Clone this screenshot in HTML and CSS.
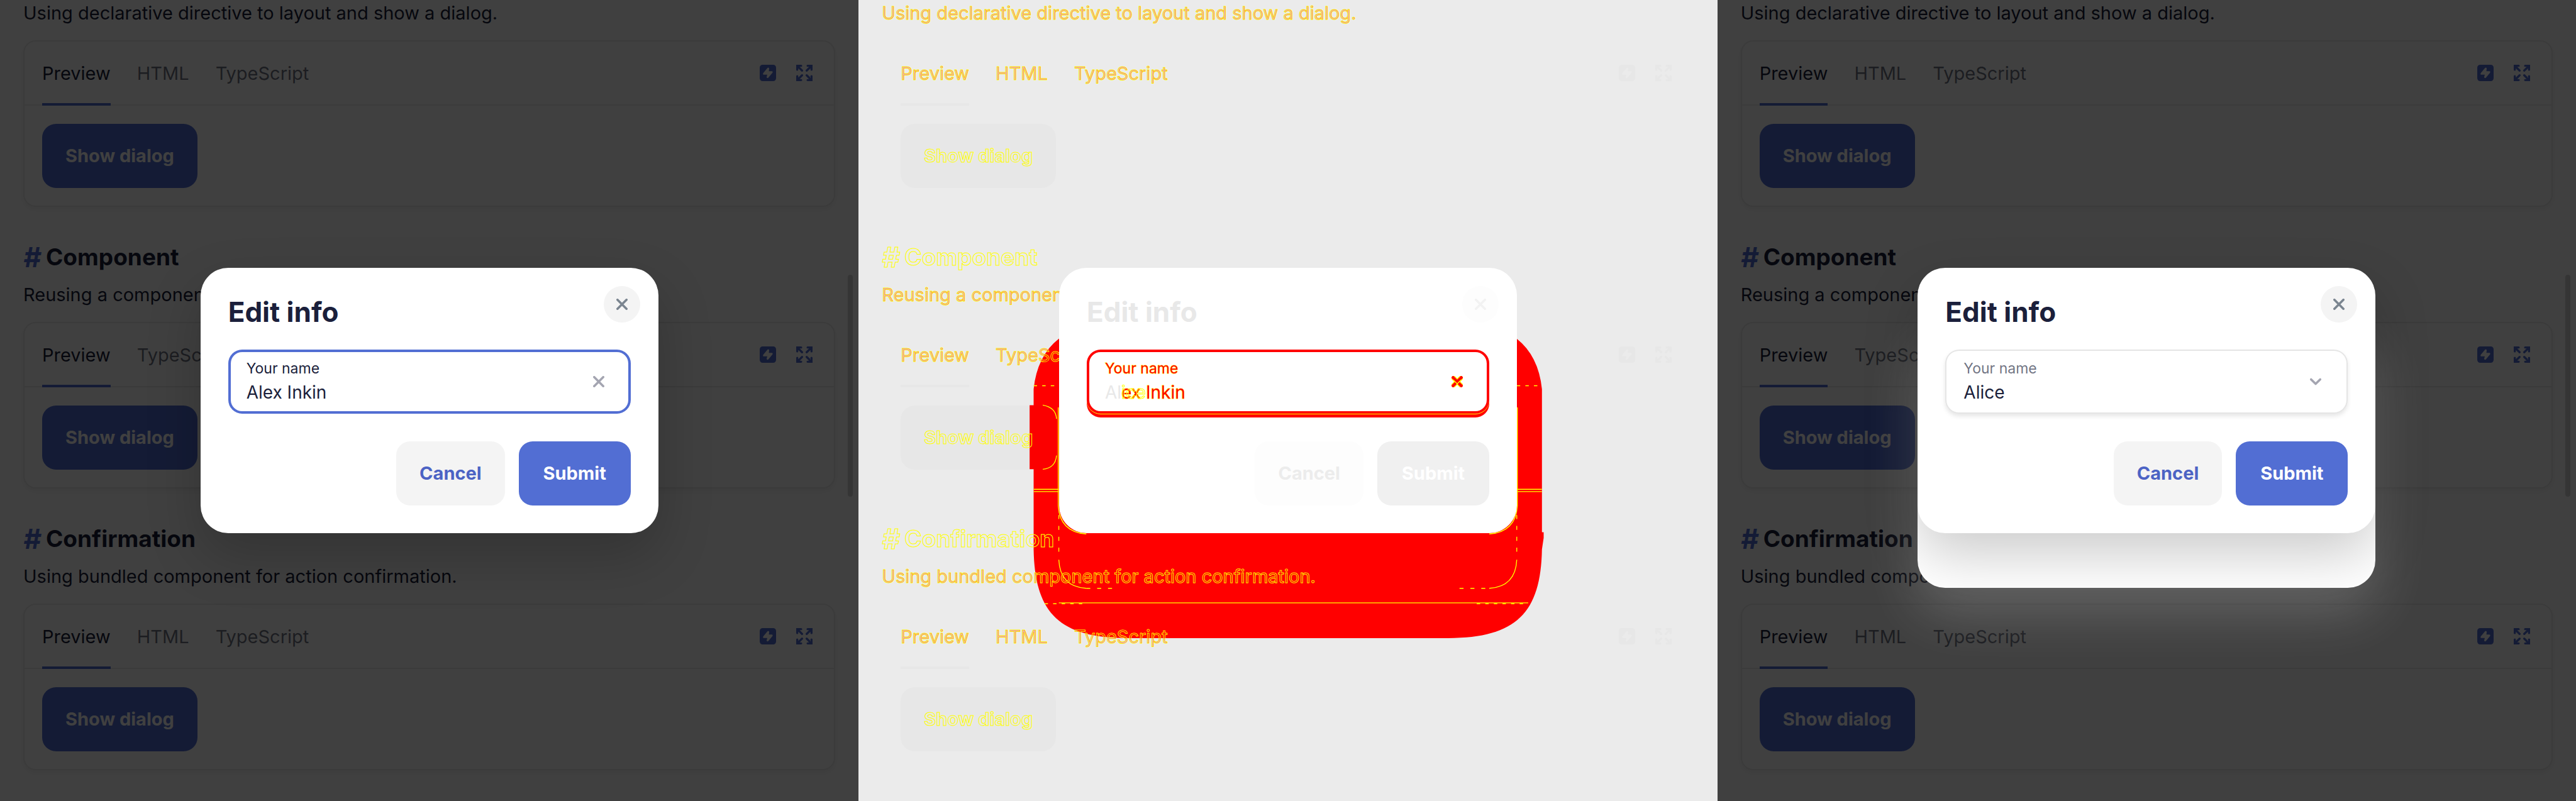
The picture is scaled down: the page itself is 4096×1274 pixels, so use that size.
FILE: index.html
```html
<!DOCTYPE html>
<html lang="en">
<head>
<meta charset="utf-8">
<title>Dialog – visual comparison</title>
<link rel="stylesheet" href="styles.css">
</head>
<body>
<svg class="sprite" aria-hidden="true">
  <symbol id="bolt" viewBox="0 0 28 28">
    <path fill="currentColor" fill-rule="evenodd" d="M5 0H23A5 5 0 0 1 28 5V23A5 5 0 0 1 23 28H5A5 5 0 0 1 0 23V5A5 5 0 0 1 5 0ZM13.4 5.4L6 14.2Q5 17 7 17H12.9L11.8 21.2Q12.4 23.6 14.6 22.4L21.8 13.8Q23 11.4 20.8 11H15.6L16.2 6.8Q15.8 4 13.4 5.4Z"/>
  </symbol>
  <symbol id="expand" viewBox="0 0 28 28">
    <g fill="none" stroke="currentColor" stroke-width="3.6" stroke-linecap="round">
      <path d="M1.8 8.5V1.8H8.5M2.5 2.5L10 10"/>
      <path d="M19.5 1.8H26.2V8.5M25.5 2.5L18 10"/>
      <path d="M1.8 19.5V26.2H8.5M2.5 25.5L10 18"/>
      <path d="M26.2 19.5V26.2H19.5M25.5 25.5L18 18"/>
    </g>
    <path fill="currentColor" d="M0 0H6L0 6ZM28 0V6L22 0ZM0 28V22L6 28ZM28 28H22L28 22Z"/>
  </symbol>
  <symbol id="cross" viewBox="0 0 20 20">
    <path fill="none" stroke="currentColor" stroke-width="4" stroke-linecap="round" d="M2 2L18 18M18 2L2 18"/>
  </symbol>
  <symbol id="chevron" viewBox="0 0 20 20">
    <path fill="none" stroke="currentColor" stroke-width="4" stroke-linecap="round" stroke-linejoin="round" d="M2 6L10 14L18 6"/>
  </symbol>
</svg>

<main class="compare">

  <!-- Baseline -->
  <section class="shot">
    <div class="page">
      <article class="example">
        <p class="lead">Using declarative directive to layout and show a dialog.</p>
        <div class="card">
          <div class="bar">
            <button class="tab active">Preview</button><button class="tab">HTML</button><button class="tab">TypeScript</button>
            <span class="tools"><button class="tool" aria-label="Edit on StackBlitz"><svg><use href="#bolt"/></svg></button><button class="tool" aria-label="Fullscreen"><svg><use href="#expand"/></svg></button></span>
          </div>
          <div class="body"><button class="btn primary">Show dialog</button></div>
        </div>
      </article>
      <article class="example">
        <h2><a href="#component">#</a>Component</h2>
        <p class="lead">Reusing a component</p>
        <div class="card">
          <div class="bar">
            <button class="tab active">Preview</button><button class="tab">TypeScript</button>
            <span class="tools"><button class="tool" aria-label="Edit on StackBlitz"><svg><use href="#bolt"/></svg></button><button class="tool" aria-label="Fullscreen"><svg><use href="#expand"/></svg></button></span>
          </div>
          <div class="body"><button class="btn primary">Show dialog</button></div>
        </div>
      </article>
      <article class="example">
        <h2><a href="#confirmation">#</a>Confirmation</h2>
        <p class="lead">Using bundled component for action confirmation.</p>
        <div class="card">
          <div class="bar">
            <button class="tab active">Preview</button><button class="tab">HTML</button><button class="tab">TypeScript</button>
            <span class="tools"><button class="tool" aria-label="Edit on StackBlitz"><svg><use href="#bolt"/></svg></button><button class="tool" aria-label="Fullscreen"><svg><use href="#expand"/></svg></button></span>
          </div>
          <div class="body"><button class="btn primary">Show dialog</button></div>
        </div>
      </article>
    </div>
    <div class="overlay">
      <div class="dialog" role="dialog" aria-labelledby="t1">
        <form class="sheet">
          <h1 id="t1">Edit info</h1>
          <button type="button" class="close" aria-label="Close"><svg><use href="#cross"/></svg></button>
          <div class="field focused">
            <div class="stack">
              <label for="name1">Your name</label>
              <input id="name1" type="text" value="Alex Inkin">
            </div>
            <button type="button" class="mark" aria-label="Clear"><svg><use href="#cross"/></svg></button>
          </div>
          <div class="actions">
            <button type="button" class="btn secondary">Cancel</button>
            <button type="button" class="btn primary submit">Submit</button>
          </div>
        </form>
      </div>
    </div>
    <div class="thumb"></div>
  </section>

  <!-- Difference map -->
  <section class="shot diff">
    <svg class="changes" viewBox="0 0 1500 1400" aria-hidden="true">
      <path fill="#f00" d="M350 592Q312 622 306 680V708H299V820H306V960C308 1070 350 1115 470 1115H1030C1150 1115 1192 1070 1194 960L1197 940V930H1194V680Q1188 622 1150 592Z"/>
      <g fill="none" stroke="#ff0" stroke-width="1.5">
        <path d="M306 855H350M306 859H350M1150 855H1194M1150 859H1194"/>
        <path d="M350 1053.500H1170"/>
        <path stroke-dasharray="6 9" d="M325 1055H400M1080 1055H1165M306 674H350M1150 674H1194"/>
        <path d="M322 708Q345 712 346 732M346 796Q344 818 322 820"/>
        <path d="M349 712V884Q352 930 398 933M1151 712V884Q1148 930 1102 933"/>
        <path stroke-dasharray="7 12" d="M350 900V970M1150 900V970M398 1028H450M1050 1028H1102"/>
        <path d="M350 978Q352 1025 398 1028M1150 978Q1148 1025 1102 1028"/>
      </g>
    </svg>
    <div class="page">
      <article class="example">
        <p class="lead">Using declarative directive to layout and show a dialog.</p>
        <div class="card">
          <div class="bar">
            <button class="tab active">Preview</button><button class="tab">HTML</button><button class="tab">TypeScript</button>
            <span class="tools"><button class="tool" aria-label="Edit on StackBlitz"><svg><use href="#bolt"/></svg></button><button class="tool" aria-label="Fullscreen"><svg><use href="#expand"/></svg></button></span>
          </div>
          <div class="body"><button class="btn primary">Show dialog</button></div>
        </div>
      </article>
      <article class="example">
        <h2><a href="#component">#</a>Component</h2>
        <p class="lead">Reusing a component</p>
        <div class="card">
          <div class="bar">
            <button class="tab active">Preview</button><button class="tab">TypeScript</button>
            <span class="tools"><button class="tool" aria-label="Edit on StackBlitz"><svg><use href="#bolt"/></svg></button><button class="tool" aria-label="Fullscreen"><svg><use href="#expand"/></svg></button></span>
          </div>
          <div class="body"><button class="btn primary">Show dialog</button></div>
        </div>
      </article>
      <article class="example">
        <h2><a href="#confirmation">#</a>Confirmation</h2>
        <p class="lead">Using bundled component for action confirmation.</p>
        <div class="card">
          <div class="bar">
            <button class="tab active">Preview</button><button class="tab">HTML</button><button class="tab">TypeScript</button>
            <span class="tools"><button class="tool" aria-label="Edit on StackBlitz"><svg><use href="#bolt"/></svg></button><button class="tool" aria-label="Fullscreen"><svg><use href="#expand"/></svg></button></span>
          </div>
          <div class="body"><button class="btn primary">Show dialog</button></div>
        </div>
      </article>
    </div>
    <div class="overlay">
      <div class="dialog" role="dialog" aria-labelledby="t2">
        <form class="sheet">
          <h1 id="t2">Edit info</h1>
          <button type="button" class="close" aria-label="Close"><svg><use href="#cross"/></svg></button>
          <div class="field">
            <div class="stack">
              <label for="name2">Your name</label>
              <output id="name2">Al<span class="other">ice</span><span class="changed">ex Inkin</span></output>
            </div>
            <span class="mark"><svg viewBox="0 0 20 20"><path fill="none" stroke="#ff0" stroke-width="8" d="M1 1L19 19M19 1L1 19"/><path fill="none" stroke="#f00" stroke-width="5" d="M1 1L19 19M19 1L1 19"/><path fill="none" stroke="#ff0" stroke-width="1.500" d="M3 7L10 14L17 7"/></svg></span>
          </div>
          <div class="actions">
            <button type="button" class="btn secondary">Cancel</button>
            <button type="button" class="btn primary submit">Submit</button>
          </div>
        </form>
      </div>
    </div>
  </section>

  <!-- Current -->
  <section class="shot">
    <div class="page">
      <article class="example">
        <p class="lead">Using declarative directive to layout and show a dialog.</p>
        <div class="card">
          <div class="bar">
            <button class="tab active">Preview</button><button class="tab">HTML</button><button class="tab">TypeScript</button>
            <span class="tools"><button class="tool" aria-label="Edit on StackBlitz"><svg><use href="#bolt"/></svg></button><button class="tool" aria-label="Fullscreen"><svg><use href="#expand"/></svg></button></span>
          </div>
          <div class="body"><button class="btn primary">Show dialog</button></div>
        </div>
      </article>
      <article class="example">
        <h2><a href="#component">#</a>Component</h2>
        <p class="lead">Reusing a component</p>
        <div class="card">
          <div class="bar">
            <button class="tab active">Preview</button><button class="tab">TypeScript</button>
            <span class="tools"><button class="tool" aria-label="Edit on StackBlitz"><svg><use href="#bolt"/></svg></button><button class="tool" aria-label="Fullscreen"><svg><use href="#expand"/></svg></button></span>
          </div>
          <div class="body"><button class="btn primary">Show dialog</button></div>
        </div>
      </article>
      <article class="example">
        <h2><a href="#confirmation">#</a>Confirmation</h2>
        <p class="lead">Using bundled component for action confirmation.</p>
        <div class="card">
          <div class="bar">
            <button class="tab active">Preview</button><button class="tab">HTML</button><button class="tab">TypeScript</button>
            <span class="tools"><button class="tool" aria-label="Edit on StackBlitz"><svg><use href="#bolt"/></svg></button><button class="tool" aria-label="Fullscreen"><svg><use href="#expand"/></svg></button></span>
          </div>
          <div class="body"><button class="btn primary">Show dialog</button></div>
        </div>
      </article>
    </div>
    <div class="overlay">
      <div class="dialog stacked" role="dialog" aria-labelledby="t3">
        <form class="sheet">
          <h1 id="t3">Edit info</h1>
          <button type="button" class="close" aria-label="Close"><svg><use href="#cross"/></svg></button>
          <div class="field">
            <div class="stack">
              <label for="name3">Your name</label>
              <select id="name3"><option>Alice</option></select>
            </div>
            <span class="mark"><svg><use href="#chevron"/></svg></span>
          </div>
          <div class="actions">
            <button type="button" class="btn secondary">Cancel</button>
            <button type="button" class="btn primary submit">Submit</button>
          </div>
        </form>
      </div>
    </div>
    <div class="thumb"></div>
  </section>

</main>
</body>
</html>
```

FILE: styles.css
```css
:root {
  --text: #1b1f3b;
  --text-2: rgba(27, 31, 59, .65);
  --text-3: rgba(27, 31, 59, .4);
  --accent: #526ed3;
  --link: #4c63c4;
  --soft: #f4f4f4;
}

* { box-sizing: border-box; margin: 0; }

body {
  font: 400 29px/40px Inter, "Liberation Sans", sans-serif;
  color: var(--text);
}

button, input, select {
  font: inherit;
  color: inherit;
  background: none;
  border: 0;
  padding: 0;
  appearance: none;
}

svg { display: block; }
.sprite { display: none; }

.compare {
  display: grid;
  grid-template-columns: repeat(3, 1fr);
  min-height: 100vh;
}

.shot {
  position: relative;
  overflow: hidden;
  background: #fff;
}

/* Documentation page under the dialog */
.page {
  position: relative;
  display: flex;
  flex-direction: column;
  gap: 58px;
  padding: 1px 37px 48px;
}

h2 {
  display: flex;
  margin-bottom: 18px;
  font-size: 37px;
  line-height: 44px;
  font-weight: 700;
}

h2 a {
  flex: 0 0 36px;
  color: var(--accent);
  font-size: 44px;
  font-style: italic;
  text-decoration: none;
}

.lead { margin-bottom: 23px; }

.card {
  border: 2px solid rgba(0, 0, 0, .08);
  border-radius: 20px;
  box-shadow: 0 4px 8px rgba(0, 0, 0, .06);
}

.bar {
  display: flex;
  gap: 42px;
  height: 102px;
  padding: 0 34px 0 28px;
  border-bottom: 2px solid rgba(0, 0, 0, .08);
}

.tab {
  height: 102px;
  color: var(--text-2);
}

.tab.active {
  color: var(--text);
  box-shadow: inset 0 -4px var(--accent);
}

.tools {
  display: flex;
  align-items: center;
  gap: 32px;
  margin-left: auto;
}

.tool { color: var(--accent); }
.tool svg { width: 26px; height: 26px; }

.body { padding: 29px 28px 28px; }

.btn {
  height: 102px;
  padding: 0 37px;
  border-radius: 22px;
  font-weight: 700;
}

.btn.primary { background: var(--accent); color: #fff; }
.btn.secondary { background: var(--soft); color: var(--link); }
.btn.submit { min-width: 178px; }
.body .btn { display: block; }

/* Dialog */
.overlay {
  position: absolute;
  inset: 0;
  display: flex;
  align-items: center;
  justify-content: center;
  background: rgba(0, 0, 0, .75);
}

.dialog {
  position: relative;
  width: 728px;
}

.dialog.stacked::before {
  content: "";
  position: absolute;
  inset: 87px 0 -87px;
  border-radius: 44px;
  background: #fff;
  box-shadow: 0 36px 87px rgba(255, 255, 255, .2);
}

.sheet {
  position: relative;
  padding: 44px;
  border-radius: 44px;
  background: #fff;
  box-shadow: 0 36px 87px rgba(0, 0, 0, .2);
}

h1 {
  margin-bottom: 34px;
  font-size: 44px;
  line-height: 52px;
  font-weight: 700;
}

.close {
  position: absolute;
  top: 29px;
  right: 29px;
  display: grid;
  place-items: center;
  width: 58px;
  height: 58px;
  border-radius: 50%;
  background: var(--soft);
  color: #7b8590;
}

.close svg, .mark svg { width: 18px; height: 18px; }

.field {
  display: flex;
  align-items: center;
  height: 102px;
  padding: 0 42px 0 29px;
  border-radius: 22px;
  box-shadow: inset 0 0 0 2px rgba(0, 0, 0, .1), 0 4px 7px rgba(0, 0, 0, .1);
}

.field.focused { box-shadow: inset 0 0 0 4px var(--accent); }

.stack {
  flex: 1;
  display: flex;
  flex-direction: column;
  gap: 4px;
}

.stack label {
  font-size: 23px;
  line-height: 30px;
  color: var(--text-2);
}

.focused label { color: var(--text); }

.stack input, .stack select, .stack output {
  width: 100%;
  height: 38px;
  font-size: 28px;
  line-height: 38px;
}

.mark { color: var(--text-3); }

.actions {
  display: flex;
  justify-content: flex-end;
  gap: 22px;
  margin-top: 44px;
}

.thumb {
  position: absolute;
  top: 437px;
  right: 9px;
  width: 8px;
  height: 353px;
  border-radius: 4px;
  background: rgba(0, 0, 0, .16);
}

/* Difference map */
.diff { background: #ebebeb; }

.changes {
  position: absolute;
  inset: 0;
  width: 100%;
  height: auto;
}

.diff .overlay { background: none; }
.diff .sheet { box-shadow: none; }
.diff .card { border-color: transparent; box-shadow: none; }
.diff .bar { border-color: transparent; }
.diff .tool { color: #e7e7e7; }
.diff .tab.active { box-shadow: inset 0 -4px #e7e7e7; }

.diff .page,
.diff .page .btn,
.diff h2 a {
  color: transparent;
  -webkit-text-stroke: 1px #ff0;
}

.diff .page .lead,
.diff .page .tab {
  color: rgba(255, 0, 0, .25);
  paint-order: stroke fill;
}

.diff .page .btn { background: rgba(0, 0, 0, .015); }

.diff h1 { color: #e8e8e8; }
.diff .close { background: #fdfdfd; color: #f2f2f2; }

.diff .field {
  box-shadow: inset 0 0 0 4px #f00, 0 1px #ff0, 0 6px #f00;
}

.diff .stack label,
.changed {
  color: #f00;
  -webkit-text-stroke: 1px #ff0;
  paint-order: stroke fill;
}

.diff output { color: #e8e8e8; }

.other {
  position: absolute;
  color: transparent;
  -webkit-text-stroke: 1px #ff0;
}

.diff .secondary { background: #fdfdfd; color: #ececec; }
.diff .sheet .primary { background: #f0f0f0; color: #fff; }
```
